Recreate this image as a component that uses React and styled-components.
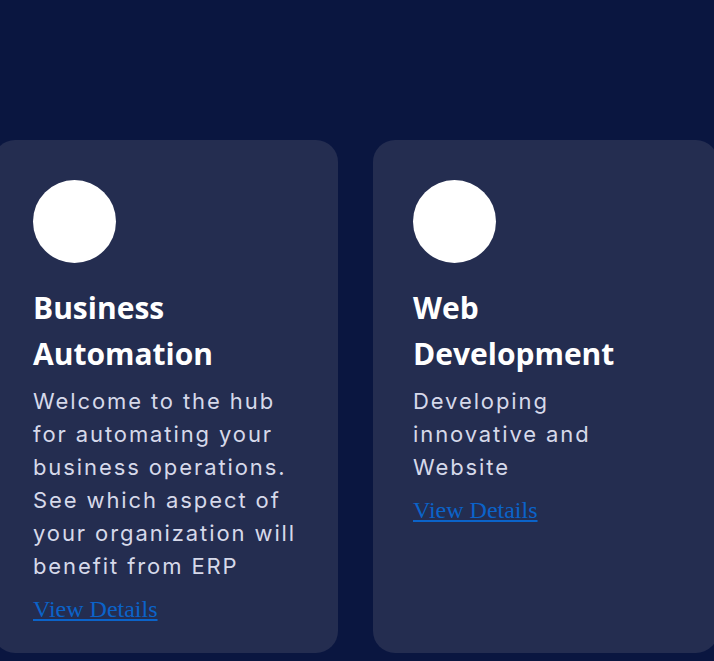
import React from "react";
import styled, { createGlobalStyle } from "styled-components";

const Global = createGlobalStyle`
  html, body { margin: 0; padding: 0; background: #0a1640; }
  body { overflow: hidden; }
`;

const Page = styled.main`
  width: 714px;
  height: 661px;
  background: #0a1640;
  overflow: hidden;
  padding-top: 140px;
  box-sizing: border-box;
`;

const Track = styled.div`
  display: flex;
  gap: 35px;
  margin-left: -7px;
  align-items: stretch;
`;

const Card = styled.article`
  flex: 0 0 345px;
  box-sizing: border-box;
  height: 513px;
  background: #242d50;
  border-radius: 22px;
  padding: 40px 40px 30px;
  display: flex;
  flex-direction: column;
`;

const Icon = styled.div`
  width: 83px;
  height: 83px;
  border-radius: 50%;
  background: #ffffff;
  flex-shrink: 0;
`;

const Title = styled.h3`
  margin: 22px 0 8px;
  font-family: "Open Sans", Inter, sans-serif;
  font-weight: 700;
  font-size: 30px;
  line-height: 46px;
  color: #ffffff;
`;

const Desc = styled.p`
  margin: 0 0 13px;
  font-family: Inter, "Noto Sans", sans-serif;
  font-weight: 400;
  font-size: 22px;
  line-height: 33px;
  letter-spacing: 1.9px;
  color: #d6d9ea;
`;

const Link = styled.a`
  font-family: "Liberation Serif", serif;
  font-size: 24px;
  color: #0b63c9;
  text-decoration: underline;
  align-self: flex-start;
`;

const services = [
  {
    title: "Business Automation",
    desc: "Welcome to the hub for automating your business operations. See which aspect of your organization will benefit from ERP",
  },
  {
    title: "Web Development",
    desc: "Developing innovative and Website",
  },
];

export default function App() {
  return (
    <>
      <Global />
      <Page>
        <Track>
          {services.map((s) => (
            <Card key={s.title}>
              <Icon />
              <Title>{s.title}</Title>
              <Desc>{s.desc}</Desc>
              <Link href="#">View Details</Link>
            </Card>
          ))}
        </Track>
      </Page>
    </>
  );
}
